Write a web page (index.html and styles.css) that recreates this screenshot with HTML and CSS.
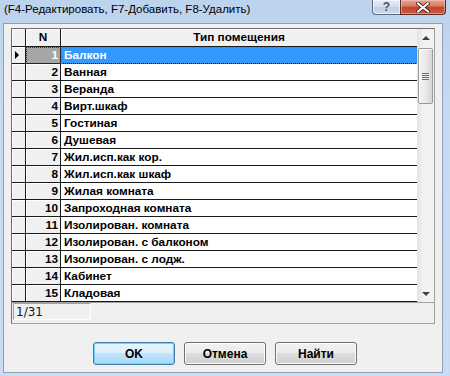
FILE: index.html
```html
<!DOCTYPE html>
<html lang="ru">
<head>
  <meta charset="UTF-8" />
  <title>Тип помещения</title>
  <link rel="stylesheet" href="styles.css">
</head>
<body>
  <div class="window">
    <div class="titlebar">
      <span class="title">(F4-Редактировать, F7-Добавить, F8-Удалить)</span>
      <div class="caption-buttons">
        <div class="cap-btn help">?</div>
        <div class="cap-btn close">
          <svg width="14" height="11" viewBox="0 0 14 11">
            <path d="M2 1.5 L12 9.5 M12 1.5 L2 9.5" stroke="#3a1a14" stroke-width="3.6" stroke-linecap="square" />
            <path d="M2 1.5 L12 9.5 M12 1.5 L2 9.5" stroke="#ffffff" stroke-width="2" stroke-linecap="square" />
          </svg>
        </div>
      </div>
    </div>

    <div class="client">
      <div class="panel">
        <div class="grid">
          <div class="cells">
            <div class="row head">
              <div class="ind"></div>
              <div class="num center">N</div>
              <div class="name center">Тип помещения</div>
            </div>
            <div class="row current">
              <div class="ind"><span class="pointer"></span></div>
              <div class="num">1</div>
              <div class="name">Балкон</div>
            </div>
            <div class="row"><div class="ind"></div><div class="num">2</div><div class="name">Ванная</div></div>
            <div class="row"><div class="ind"></div><div class="num">3</div><div class="name">Веранда</div></div>
            <div class="row"><div class="ind"></div><div class="num">4</div><div class="name">Вирт.шкаф</div></div>
            <div class="row"><div class="ind"></div><div class="num">5</div><div class="name">Гостиная</div></div>
            <div class="row"><div class="ind"></div><div class="num">6</div><div class="name">Душевая</div></div>
            <div class="row"><div class="ind"></div><div class="num">7</div><div class="name">Жил.исп.как кор.</div></div>
            <div class="row"><div class="ind"></div><div class="num">8</div><div class="name">Жил.исп.как шкаф</div></div>
            <div class="row"><div class="ind"></div><div class="num">9</div><div class="name">Жилая комната</div></div>
            <div class="row"><div class="ind"></div><div class="num">10</div><div class="name">Запроходная комната</div></div>
            <div class="row"><div class="ind"></div><div class="num">11</div><div class="name">Изолирован. комната</div></div>
            <div class="row"><div class="ind"></div><div class="num">12</div><div class="name">Изолирован. с балконом</div></div>
            <div class="row"><div class="ind"></div><div class="num">13</div><div class="name">Изолирован. с лодж.</div></div>
            <div class="row"><div class="ind"></div><div class="num">14</div><div class="name">Кабинет</div></div>
            <div class="row"><div class="ind"></div><div class="num">15</div><div class="name">Кладовая</div></div>
          </div>

          <div class="vscroll">
            <div class="arrow"><span class="tri-up"></span></div>
            <div class="track">
              <div class="thumb"><span class="grip"></span></div>
            </div>
            <div class="arrow"><span class="tri-down"></span></div>
          </div>
        </div>

        <div class="status">
          <div class="counter">1/31</div>
        </div>
      </div>

      <div class="buttons">
        <button class="btn default">OK</button>
        <button class="btn">Отмена</button>
        <button class="btn">Найти</button>
      </div>
    </div>
  </div>
</body>
</html>
```

FILE: styles.css
```css
:root {
  --frame: #c3d7ef;
  --face: #f0f0f0;
  --line: #1a1a1a;
  --select: #3399ff;
}

* {
  box-sizing: border-box;
  margin: 0;
  padding: 0;
}

body {
  width: 450px;
  height: 376px;
  overflow: hidden;
  font-family: 'Liberation Sans', Arial, sans-serif;
  background: var(--frame);
}

.window {
  width: 450px;
  height: 376px;
  display: flex;
  flex-direction: column;
  background: linear-gradient(180deg, #bcd3ee 0%, #c6daf1 30%, #cadcf1 100%);
}

/* title bar */

.titlebar {
  height: 23px;
  flex: none;
  display: flex;
  align-items: flex-start;
  padding: 0 4px 0 4px;
}

.title {
  font-size: 11.5px;
  line-height: 18px;
  color: #000;
  white-space: nowrap;
}

.caption-buttons {
  margin-left: auto;
  display: flex;
  height: 15px;
}

.cap-btn {
  height: 15px;
  display: flex;
  align-items: center;
  justify-content: center;
  border: 1px solid #5a6a80;
  border-top: none;
}

.help {
  width: 28px;
  border-right: none;
  border-radius: 0 0 0 4px;
  background: linear-gradient(180deg, #e3ebf5 0%, #d2dded 50%, #c1cfe2 51%, #ccd9ea 100%);
  color: #556;
  font-size: 12px;
  font-weight: bold;
  box-shadow: inset 0 0 0 1px rgba(255, 255, 255, 0.6);
}

.close {
  width: 46px;
  border-color: #5b2a23;
  border-radius: 0 0 4px 0;
  background: linear-gradient(180deg, #e6a493 0%, #d87a63 45%, #c4422b 50%, #d0583e 100%);
  box-shadow: inset 0 0 0 1px rgba(255, 210, 200, 0.5);
}

/* client area */

.client {
  flex: 1;
  margin: 0 7px 3px 3px;
  background: var(--face);
  border: 1px solid #8f9fb5;
  padding: 4px 7px 0 7px;
  display: flex;
  flex-direction: column;
}

.panel {
  width: 424px;
  border: 1px solid;
  border-color: #6e6e6e #a0a0a0 #a0a0a0 #6e6e6e;
  display: flex;
  flex-direction: column;
}

.grid {
  display: flex;
  height: 273px;
}

.cells {
  flex: 1;
  background: var(--face);
}

.row {
  display: grid;
  grid-template-columns: 14px 35px 356px;
  height: 17px;
  font-size: 11.8px;
  font-weight: bold;
  color: #000;
}

.row > div {
  border-right: 1px solid var(--line);
  border-bottom: 1px solid var(--line);
  line-height: 16px;
  white-space: nowrap;
  overflow: hidden;
}

.row > .name {
  border-right: none;
  background: #fff;
  padding-left: 3px;
}

.row .ind,
.row .num {
  background: var(--face);
  box-shadow: inset 1px 1px 0 #fff;
}

.row .num {
  text-align: right;
  padding-right: 2px;
}

.row.head {
  height: 18px;
}

.row.head > div {
  line-height: 17px;
  background: var(--face);
  box-shadow: inset 1px 1px 0 #fff;
}

.row.head .center {
  text-align: center;
  padding: 0;
}

.row.current .num {
  background: #a6a6a6;
  color: #fff;
  box-shadow: none;
  outline: 1px dotted #333;
  outline-offset: -1px;
}

.row.current .name {
  background: var(--select);
  color: #fff;
  outline: 1px dotted #c0602a;
  outline-offset: -1px;
}

.pointer {
  display: block;
  width: 0;
  height: 0;
  margin: 4px 0 0 3px;
  border-top: 4px solid transparent;
  border-bottom: 4px solid transparent;
  border-left: 4px solid #000;
}

/* scrollbar */

.vscroll {
  width: 17px;
  display: flex;
  flex-direction: column;
  background: linear-gradient(90deg, #e3e3e3 0%, #f2f2f2 40%, #f2f2f2 100%);
}

.arrow {
  height: 17px;
  display: flex;
  align-items: center;
  justify-content: center;
}

.tri-up,
.tri-down {
  width: 0;
  height: 0;
  border-left: 4px solid transparent;
  border-right: 4px solid transparent;
}

.tri-up {
  border-bottom: 4px solid #404040;
}

.tri-down {
  border-top: 4px solid #404040;
}

.track {
  flex: 1;
  padding: 2px 1px 0 1px;
}

.thumb {
  height: 56px;
  border: 1px solid #9a9a9a;
  border-radius: 2px;
  background: linear-gradient(90deg, #f4f4f4 0%, #e9e9e9 50%, #d6d6d6 100%);
  box-shadow: inset 1px 1px 0 #fdfdfd;
  display: flex;
  align-items: center;
  justify-content: center;
}

.grip {
  width: 7px;
  height: 7px;
  background: repeating-linear-gradient(180deg, #6d6d6d 0, #6d6d6d 1px, #eeeeee 1px, #eeeeee 2px);
}

/* status line */

.status {
  height: 21px;
  border-top: 1px solid #a0a0a0;
  padding: 0 0 0 1px;
}

.counter {
  width: 78px;
  height: 17px;
  border: 1px solid;
  border-color: #a0a0a0 #ffffff #ffffff #a0a0a0;
  font-family: 'DejaVu Sans', Verdana, sans-serif;
  font-size: 12px;
  line-height: 16px;
  padding-left: 2px;
  color: #101828;
}

/* dialog buttons */

.buttons {
  display: flex;
  gap: 9px;
  margin: 18px 0 0 82px;
}

.btn {
  width: 82px;
  height: 23px;
  font-family: 'Liberation Sans', Arial, sans-serif;
  font-size: 12px;
  font-weight: bold;
  color: #000;
  border: 1px solid #707070;
  border-radius: 3px;
  background: linear-gradient(180deg, #f2f2f2 0%, #ebebeb 49%, #dddddd 50%, #cfcfcf 100%);
  box-shadow: inset 0 0 0 1px #fcfcfc;
}

.btn.default {
  border-color: #3c7fb1;
  box-shadow: inset 0 0 0 1px #6fd0f6;
  background: linear-gradient(180deg, #eaf6fd 0%, #d9f0fc 49%, #bee6fd 50%, #a7d9f5 100%);
}
```
